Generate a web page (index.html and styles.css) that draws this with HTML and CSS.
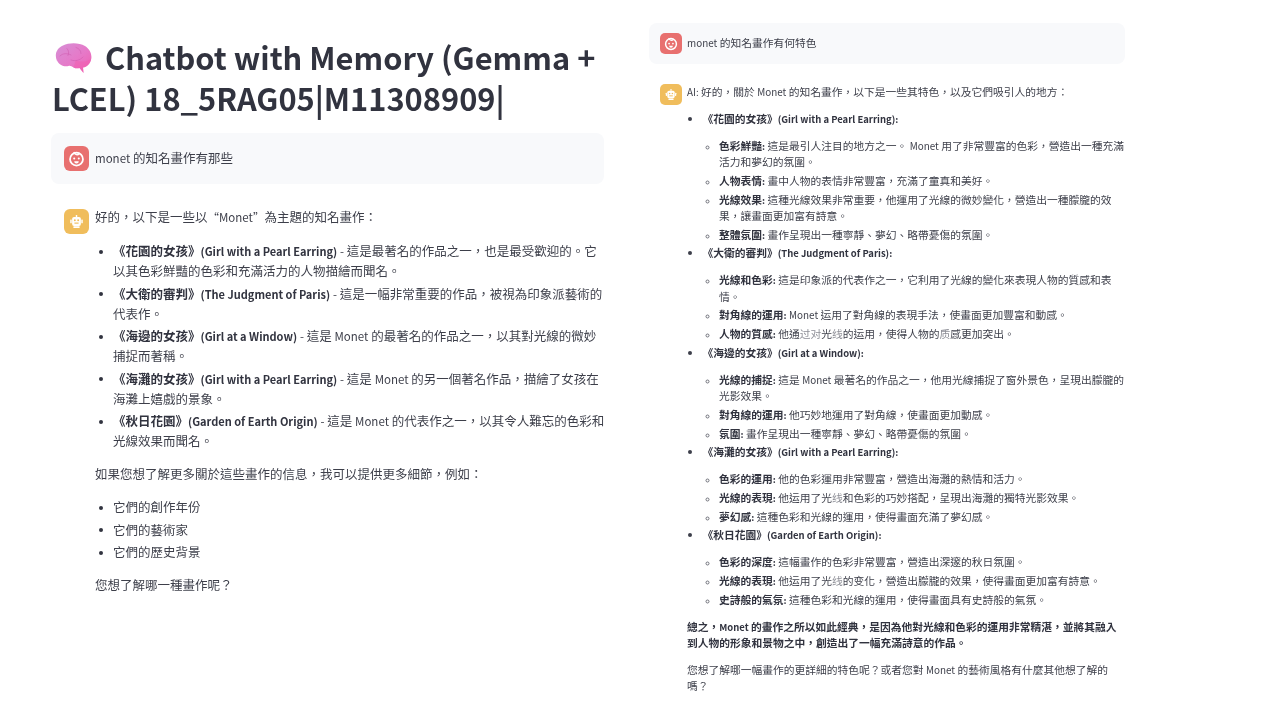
FILE: index.html
```html
<!DOCTYPE html>
<html lang="zh-Hant">
<head>
<meta charset="utf-8">
<title>Chatbot with Memory</title>
<link rel="stylesheet" href="styles.css">
</head>
<body>
<svg class="defs" width="0" height="0" aria-hidden="true">
  <defs>
    <linearGradient id="brainFill" x1="0" y1="0" x2="1" y2="1">
      <stop offset="0" stop-color="#d68fd6"/>
      <stop offset="0.55" stop-color="#e679c8"/>
      <stop offset="1" stop-color="#f05fb0"/>
    </linearGradient>
    <symbol id="user-face" viewBox="0 0 24 24">
      <circle cx="12" cy="12.600" r="6.200" fill="none" stroke="#fff" stroke-width="1.700"/>
      <path d="M9.800 6.400c.4 1.900 3.400 2.600 4.800 1" fill="none" stroke="#fff" stroke-width="1.500" stroke-linecap="round"/>
      <circle cx="9.800" cy="12" r="1" fill="#fff"/>
      <circle cx="14.200" cy="12" r="1" fill="#fff"/>
      <path d="M9.800 14.600h4.400a2.200 2.200 0 0 1-4.400 0z" fill="#fff"/>
    </symbol>
    <symbol id="bot-face" viewBox="0 0 24 24">
      <rect x="11.300" y="5.800" width="1.400" height="2" fill="#fff"/>
      <rect x="7.800" y="7.600" width="8.400" height="8.600" rx="1.800" fill="#fff"/>
      <rect x="6" y="10" width="1.400" height="3.600" rx=".5" fill="#fff"/>
      <rect x="16.600" y="10" width="1.400" height="3.600" rx=".5" fill="#fff"/>
      <rect x="9" y="16.600" width="6" height="1.600" rx=".5" fill="#fff"/>
      <circle cx="10.400" cy="10.800" r=".9" fill="#f0bd5c"/>
      <circle cx="13.600" cy="10.800" r=".9" fill="#f0bd5c"/>
      <rect x="10" y="13" width="4" height="1.100" fill="#f0bd5c"/>
    </symbol>
  </defs>
</svg>

<main class="page">
  <section class="col col-left">
    <h1 class="title"><svg class="brain" viewBox="0 0 37 32" aria-hidden="true">
        <path d="M2 18C-1 11 2 5 8 2.500 14-.5 24-.5 30 3c5 3 7.500 9 6 14-1 4-4 7-8 7.500l.5 5.500-4-5c-2 .5-4 .5-6-.5-2-1-3-2-5-1.500-4.500 1-9.500-1-11.500-5.500z" fill="url(#brainFill)"/>
        <path d="M21 17c4 2.500 10 2 15-1-1 4.500-4 8-8 8.500l.5 5.500-4-5c-2 .5-4 .5-6-.5z" fill="#f05fb0" fill-opacity=".55"/>
        <path d="M5 13c3-3 7-3 11-1M12 5.500c2 2 2 5 1 7M21 4.500c3 1 5 3 5 6M16 17c4 1.500 9 .5 12-3" fill="none" stroke="#cf5cae" stroke-opacity=".7" stroke-width=".8" stroke-linecap="round"/>
      </svg>Chatbot with Memory (Gemma + LCEL) 18_5RAG05|M11308909|</h1>

    <div class="msg msg-user">
      <div class="avatar avatar-user"><svg><use href="#user-face"/></svg></div>
      <div class="body"><p><span class="en">monet</span> 的知名畫作有那些</p></div>
    </div>

    <div class="msg msg-bot">
      <div class="avatar avatar-bot"><svg><use href="#bot-face"/></svg></div>
      <div class="body">
        <p>好的&#xFF0C;以下是一些以<span class="en">“Monet”</span>為主題的知名畫作&#xFF1A;</p>
        <ul>
          <li><strong>《花園的女孩》<span class="en">(Girl with a Pearl Earring)</span></strong> <span class="en">-</span> 這是最著名的作品之一&#xFF0C;也是最受歡迎的。它以其色彩鮮豔的色彩和充滿活力的人物描繪而聞名。</li>
          <li><strong>《大衛的審判》<span class="en">(The Judgment of Paris)</span></strong> <span class="en">-</span> 這是一幅非常重要的作品&#xFF0C;被視為印象派藝術的代表作。</li>
          <li><strong>《海邊的女孩》<span class="en">(Girl at a Window)</span></strong> <span class="en">-</span> 這是 <span class="en">Monet</span> 的最著名的作品之一&#xFF0C;以其對光線的微妙捕捉而著稱。</li>
          <li><strong>《海灘的女孩》<span class="en">(Girl with a Pearl Earring)</span></strong> <span class="en">-</span> 這是 <span class="en">Monet</span> 的另一個著名作品&#xFF0C;描繪了女孩在海灘上嬉戲的景象。</li>
          <li><strong>《秋日花園》<span class="en">(Garden of Earth Origin)</span></strong> <span class="en">-</span> 這是 <span class="en">Monet</span> 的代表作之一&#xFF0C;以其令人難忘的色彩和光線效果而聞名。</li>
        </ul>
        <p>如果您想了解更多關於這些畫作的信息&#xFF0C;我可以提供更多細節&#xFF0C;例如&#xFF1A;</p>
        <ul class="plain">
          <li>它們的創作年份</li>
          <li>它們的藝術家</li>
          <li>它們的歷史背景</li>
        </ul>
        <p>您想了解哪一種畫作呢&#xFF1F;</p>
      </div>
    </div>
  </section>

  <section class="col col-right">
    <div class="msg msg-user">
      <div class="avatar avatar-user"><svg><use href="#user-face"/></svg></div>
      <div class="body"><p><span class="en">monet</span> 的知名畫作有何特色</p></div>
    </div>

    <div class="msg msg-bot">
      <div class="avatar avatar-bot"><svg><use href="#bot-face"/></svg></div>
      <div class="body">
        <p><span class="en">AI:</span> 好的&#xFF0C;關於 <span class="en">Monet</span> 的知名畫作&#xFF0C;以下是一些其特色&#xFF0C;以及它們吸引人的地方&#xFF1A;</p>
        <ul>
          <li><strong>《花園的女孩》<span class="en">(Girl with a Pearl Earring):</span></strong>
            <ul>
              <li><strong>色彩鮮豔<span class="en">:</span></strong> 這是最引人注目的地方之一。 <span class="en">Monet</span> 用了非常豐富的色彩&#xFF0C;營造出一種充滿活力和夢幻的氛圍。</li>
              <li><strong>人物表情<span class="en">:</span></strong> 畫中人物的表情非常豐富&#xFF0C;充滿了童真和美好。</li>
              <li><strong>光線效果<span class="en">:</span></strong> 這種光線效果非常重要&#xFF0C;他運用了光線的微妙變化&#xFF0C;營造出一種朦朧的效果&#xFF0C;讓畫面更加富有詩意。</li>
              <li><strong>整體氛圍<span class="en">:</span></strong> 畫作呈現出一種寧靜、夢幻、略帶憂傷的氛圍。</li>
            </ul>
          </li>
          <li><strong>《大衛的審判》<span class="en">(The Judgment of Paris):</span></strong>
            <ul>
              <li><strong>光線和色彩<span class="en">:</span></strong> 這是印象派的代表作之一&#xFF0C;它利用了光線的變化來表現人物的質感和表情。</li>
              <li><strong>對角線的運用<span class="en">:</span></strong> <span class="en">Monet</span> 运用了對角線的表現手法&#xFF0C;使畫面更加豐富和動感。</li>
              <li><strong>人物的質感<span class="en">:</span></strong> 他通<span class="faint">过对</span>光<span class="faint">线</span>的运用&#xFF0C;使得人物的<span class="faint">质</span>感更加突出。</li>
            </ul>
          </li>
          <li><strong>《海邊的女孩》<span class="en">(Girl at a Window):</span></strong>
            <ul>
              <li><strong>光線的捕捉<span class="en">:</span></strong> 這是 <span class="en">Monet</span> 最著名的作品之一&#xFF0C;他用光線捕捉了窗外景色&#xFF0C;呈現出朦朧的光影效果。</li>
              <li><strong>對角線的運用<span class="en">:</span></strong> 他巧妙地運用了對角線&#xFF0C;使畫面更加動感。</li>
              <li><strong>氛圍<span class="en">:</span></strong> 畫作呈現出一種寧靜、夢幻、略帶憂傷的氛圍。</li>
            </ul>
          </li>
          <li><strong>《海灘的女孩》<span class="en">(Girl with a Pearl Earring):</span></strong>
            <ul>
              <li><strong>色彩的運用<span class="en">:</span></strong> 他的色彩運用非常豐富&#xFF0C;營造出海灘的熱情和活力。</li>
              <li><strong>光線的表現<span class="en">:</span></strong> 他运用了光<span class="faint">线</span>和色彩的巧妙搭配&#xFF0C;呈現出海灘的獨特光影效果。</li>
              <li><strong>夢幻感<span class="en">:</span></strong> 這種色彩和光線的運用&#xFF0C;使得畫面充滿了夢幻感。</li>
            </ul>
          </li>
          <li><strong>《秋日花園》<span class="en">(Garden of Earth Origin):</span></strong>
            <ul>
              <li><strong>色彩的深度<span class="en">:</span></strong> 這幅畫作的色彩非常豐富&#xFF0C;營造出深邃的秋日氛圍。</li>
              <li><strong>光線的表現<span class="en">:</span></strong> 他运用了光<span class="faint">线</span>的变化&#xFF0C;營造出朦朧的效果&#xFF0C;使得畫面更加富有詩意。</li>
              <li><strong>史詩般的氣氛<span class="en">:</span></strong> 這種色彩和光線的運用&#xFF0C;使得畫面具有史詩般的氣氛。</li>
            </ul>
          </li>
        </ul>
        <p><strong>總之&#xFF0C;<span class="en">Monet</span> 的畫作之所以如此經典&#xFF0C;是因為他對光線和色彩的運用非常精湛&#xFF0C;並將其融入到人物的形象和景物之中&#xFF0C;創造出了一幅充滿詩意的作品。</strong></p>
        <p>您想了解哪一幅畫作的更詳細的特色呢&#xFF1F;或者您對 <span class="en">Monet</span> 的藝術風格有什麼其他想了解的嗎&#xFF1F;</p>
      </div>
    </div>
  </section>
</main>
</body>
</html>
```
FILE: styles.css
```css
* { box-sizing: border-box; }
html, body { margin: 0; padding: 0; }
body {
  width: 1280px;
  height: 720px;
  overflow: hidden;
  background: #fff;
  color: #3d3f4a;
  font-family: "Noto Sans CJK TC", "Noto Sans", sans-serif;
}
.defs { display: block; height: 0; }
.page { display: flex; align-items: flex-start; padding-left: 51px; filter: blur(0.3px); }
.col { flex: none; }
.col-left { width: 553px; padding-top: 36px; font-size: 12.5px; line-height: 20px; }
.col-right { width: 476px; margin-left: 45px; padding-top: 23px; font-size: 10.75px; line-height: 16.4px; }

.en { font-size: 0.92em; line-height: 1; }
strong .en { font-size: 0.88em; }

.title {
  margin: 0 0 15px 1px;
  font-size: 30.8px;
  line-height: 41px;
  font-weight: 700;
  color: #31333f;
}
.brain { width: 37px; height: 32px; margin: 0 13px 0 3px; vertical-align: -5px; }

.msg { display: flex; }
.msg-user { background: #f8f9fb; border-radius: 8px; }
.body { flex: 1; min-width: 0; margin-right: -2px; }
.body p { margin: 0; }
.avatar { flex: none; display: flex; align-items: center; justify-content: center; }
.avatar svg { width: 100%; height: 100%; display: block; }
.avatar-user { background: #e8706f; }
.avatar-bot { background: #f0bd5c; }
strong { font-weight: 700; color: #31333f; }
.faint { color: #8d8e96; }
ul { margin: 0; padding: 0; }

.col-left .msg { padding: 13px 0 13px 13px; gap: 6px; }
.col-left .msg-bot { margin-top: 12px; }
.col-left .avatar { width: 25px; height: 25px; border-radius: 6px; }
.col-left .msg-user .body { padding-top: 2px; }
.col-left .body > p { margin-bottom: 13px; }
.col-left .body > p:first-child { margin-top: -2px; margin-bottom: 14px; }
.col-left .body > ul { margin-bottom: 13px; padding-left: 18px; list-style: none; }
.col-left .msg-user .body > p { margin-top: 0; margin-bottom: 0; }
.col-left li { text-indent: -14.5px; }
.col-left li::before {
  content: "";
  display: inline-block;
  width: 4px;
  height: 4px;
  margin-right: 10.5px;
  border-radius: 50%;
  background: #31333f;
  vertical-align: 2.5px;
}
.col-left li + li { margin-top: 2.6px; }
.col-left .plain li + li { margin-top: 2.5px; }

.col-right .msg { padding: 10px 0 10px 11px; gap: 5px; }
.col-right .msg-bot { margin-top: 10px; }
.col-right .avatar { width: 22px; height: 21px; border-radius: 5px; }
.col-right .msg-user .body { padding-top: 2px; }
.col-right .body > p { margin-bottom: 10.5px; }
.col-right .body > ul { margin-bottom: 10.5px; padding-left: 15.5px; }
.col-right li + li { margin-top: 2.3px; }
.col-right li ul { margin-top: 10.5px; padding-left: 16.5px; list-style: circle; }
.col-right li ul li::marker { font-size: 0.8em; color: #6d6f78; }
.col-right .msg-user .body > p { margin-bottom: 0; }
```
